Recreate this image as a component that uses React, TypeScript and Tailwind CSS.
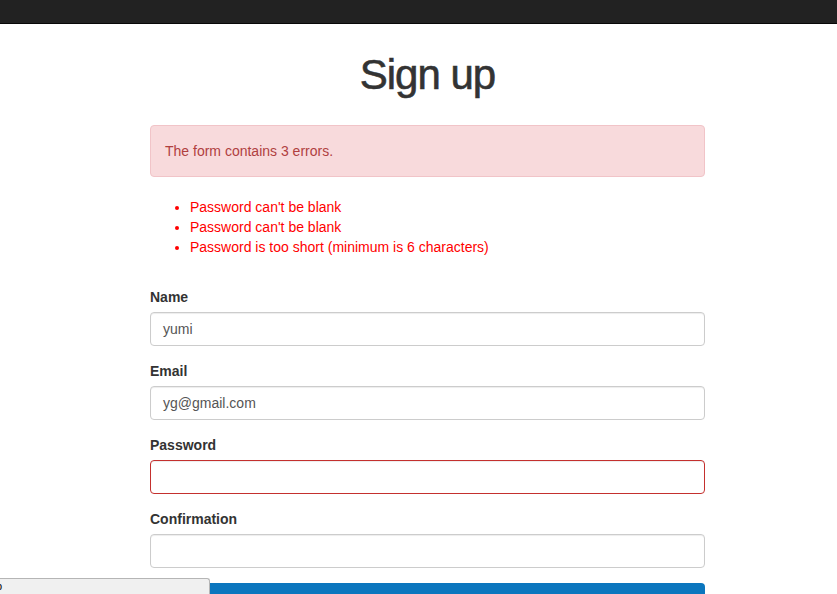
const errors = [
  "Password can't be blank",
  "Password can't be blank",
  "Password is too short (minimum is 6 characters)",
];

const fields = [
  { label: "Name", value: "yumi", error: false },
  { label: "Email", value: "yg@gmail.com", error: false },
  { label: "Password", value: "", error: true },
  { label: "Confirmation", value: "", error: false },
];

export default function App() {
  return (
    <div className="relative h-[594px] overflow-hidden bg-white font-['Liberation_Sans',Arial,sans-serif] text-[14px] leading-[20px] text-[#333]">
      <div className="h-[24px] bg-[#222] border-b border-[#080808]" />

      <div className="ml-[150px] w-[555px]">
        <h1 className="mt-[28px] mb-[27px] h-[46px] text-center text-[42px] leading-[46px] tracking-[-1px] text-[#333] [-webkit-text-stroke:0.6px_#333]">
          Sign up
        </h1>

        <div className="rounded-[4px] border border-[#f1c4c8] bg-[#f8dadc] px-[14px] py-[15px] text-[#b0403f]">
          The form contains 3 errors.
        </div>

        <ul className="mt-[20px] list-disc pl-[40px] text-[#ff0000]">
          {errors.map((e, i) => (
            <li key={i}>{e}</li>
          ))}
        </ul>

        <form className="mt-[30px]">
          {fields.map((f) => (
            <div key={f.label}>
              <label className="block font-bold">{f.label}</label>
              <div
                className={`mt-[5px] mb-[15px] h-[34px] rounded-[4px] border px-[12px] py-[6px] text-[#555] shadow-[inset_0_1px_1px_rgba(0,0,0,0.075)] ${
                  f.error ? "border-[#c4302e]" : "border-[#ccc]"
                }`}
              >
                {f.value}
              </div>
            </div>
          ))}
          <div className="h-[40px] rounded-t-[4px] bg-[#0b76be]" />
        </form>
      </div>

      <div className="absolute bottom-0 left-0 h-[16px] w-[210px] overflow-hidden rounded-tr-[3px] border-t border-r border-[#b5b5b5] bg-[#f0f0f0] text-[11px] leading-[15px] text-black">
        <span className="ml-[-4px]">p</span>
      </div>
    </div>
  );
}
